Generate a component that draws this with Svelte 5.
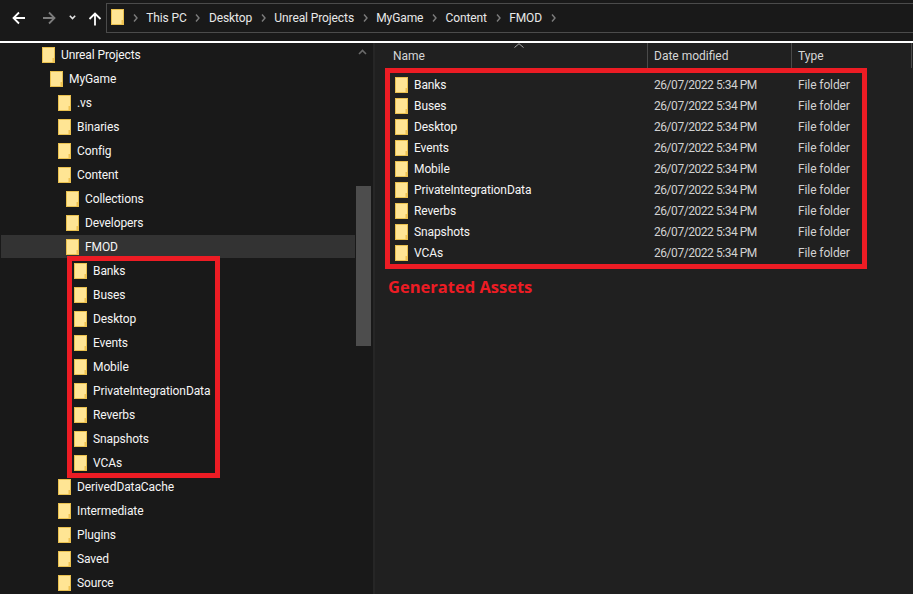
<script>
  const crumbs = ['This PC', 'Desktop', 'Unreal Projects', 'MyGame', 'Content', 'FMOD'];
  const generated = ['Banks', 'Buses', 'Desktop', 'Events', 'Mobile', 'PrivateIntegrationData', 'Reverbs', 'Snapshots', 'VCAs'];
  const before = [
    ['Unreal Projects', 0],
    ['MyGame', 1],
    ['.vs', 2],
    ['Binaries', 2],
    ['Config', 2],
    ['Content', 2],
    ['Collections', 3],
    ['Developers', 3]
  ];
  const after = ['DerivedDataCache', 'Intermediate', 'Plugins', 'Saved', 'Source'];
</script>

{#snippet folder()}
  <svg class="folder" width="13" height="16" viewBox="0 0 13 16">
    <rect x="0.5" y="0.5" width="12" height="15" fill="#ffe594" stroke="#eac14f" />
    <path d="M10.5 15.5 V11 H12.5 V15.5 Z" fill="#efc253" />
  </svg>
{/snippet}

{#snippet chevron()}
  <svg class="sep" width="5" height="8" viewBox="0 0 5 8"><path d="M1 0.5 L4 4 L1 7.5" fill="none" stroke="#7c7c7c" stroke-width="1.4" /></svg>
{/snippet}

<div class="window">
  <header class="toolbar">
    <div class="nav">
      <svg class="back" width="14" height="14" viewBox="0 0 14 14"><path d="M13 7 H2 M7 1.5 L1.5 7 L7 12.5" fill="none" stroke="#fff" stroke-width="1.8" /></svg>
      <svg class="forward" width="14" height="14" viewBox="0 0 14 14"><path d="M1 7 H12 M7 1.5 L12.5 7 L7 12.5" fill="none" stroke="#7d7d7d" stroke-width="1.8" /></svg>
      <svg class="recent" width="7" height="5" viewBox="0 0 7 5"><path d="M0.8 0.8 L3.5 3.6 L6.2 0.8" fill="none" stroke="#e6e6e6" stroke-width="1.5" /></svg>
      <svg class="up" width="14" height="14" viewBox="0 0 14 14"><path d="M7 13.5 V2 M1.5 7 L7 1.5 L12.5 7" fill="none" stroke="#fff" stroke-width="1.8" /></svg>
    </div>
    <div class="address">
      {@render folder()}
      {#each crumbs as crumb}
        {@render chevron()}
        <span class="crumb">{crumb}</span>
      {/each}
      {@render chevron()}
    </div>
  </header>

  <main class="panes">
    <aside class="tree">
      <div class="tree-rows">
        {#each before as [name, depth]}
          <div class="row" style="padding-left: {42 + depth * 8}px">{@render folder()}<span>{name}</span></div>
        {/each}
        <div class="row selected" style="padding-left: 65px">{@render folder()}<span>FMOD</span></div>
        <div class="tree-group">
          {#each generated as name}
            <div class="row" style="padding-left: 74px">{@render folder()}<span>{name}</span></div>
          {/each}
        </div>
        {#each after as name}
          <div class="row" style="padding-left: 58px">{@render folder()}<span>{name}</span></div>
        {/each}
      </div>
      <div class="scrollbar">
        <svg class="scroll-up" width="9" height="6" viewBox="0 0 9 6"><path d="M1 5 L4.5 1.5 L8 5" fill="none" stroke="#6a6a6a" stroke-width="1.6" /></svg>
        <div class="thumb"></div>
      </div>
    </aside>

    <section class="list">
      <svg class="sort" width="10" height="5" viewBox="0 0 10 5"><path d="M0.5 4.5 L5 0.7 L9.5 4.5" fill="none" stroke="#a8a8a8" /></svg>
      <div class="head">
        <span class="col name">Name</span>
        <span class="col date">Date modified</span>
        <span class="col type">Type</span>
      </div>
      <div class="list-group">
        {#each generated as name}
          <div class="item">
            <span class="item-name">{@render folder()}<span>{name}</span></span>
            <span class="item-date">26/07/2022 5:34 PM</span>
            <span class="item-type">File folder</span>
          </div>
        {/each}
      </div>
      <div class="caption">Generated Assets</div>
    </section>
  </main>
</div>

<style>
  :global(body) {
    margin: 0;
    background: #191919;
  }

  .window {
    width: 913px;
    height: 594px;
    overflow: hidden;
    display: flex;
    flex-direction: column;
    background: #191919;
    color: #fff;
    font-family: Roboto, "Noto Sans", sans-serif;
    font-size: 12px;
    letter-spacing: -0.1px;
  }

  .folder {
    flex: none;
    display: block;
  }

  .toolbar {
    flex: none;
    display: flex;
    align-items: flex-start;
    box-sizing: border-box;
    padding-top: 3px;
    border-bottom: 2px solid #fff;
    height: 43px;
  }

  .nav {
    width: 106px;
    flex: none;
    height: 30px;
    display: flex;
    align-items: center;
    padding-left: 12px;
    box-sizing: border-box;
  }

  .forward {
    margin-left: 16px;
  }

  .recent {
    margin-left: 13px;
    margin-top: -2px;
  }

  .up {
    margin-left: 12px;
    margin-top: 2px;
  }

  .address {
    flex: none;
    width: 860px;
    height: 30px;
    box-sizing: border-box;
    border: 1px solid #4b4b4b;
    display: flex;
    align-items: center;
    padding-left: 4px;
    color: #e8e8e8;
  }

  .address .folder {
    margin-top: -2px;
  }

  .sep {
    margin: 0 8.6px;
    flex: none;
  }

  .panes {
    flex: 1;
    display: flex;
    min-height: 0;
  }

  .tree {
    width: 375px;
    flex: none;
    box-sizing: border-box;
    display: flex;
    border-right: 2px solid #262626;
    overflow: hidden;
  }

  .tree-rows {
    width: 355px;
    flex: none;
  }

  .row {
    height: 24px;
    display: flex;
    align-items: center;
    gap: 6px;
    box-sizing: border-box;
    color: #f5f5f5;
    white-space: nowrap;
  }

  .selected {
    background: #333;
    margin-left: 1px;
    height: 23px;
    margin-bottom: 1px;
  }

  .tree-group {
    position: relative;
  }

  .tree-group::after,
  .list-group::after {
    content: "";
    position: absolute;
    border: 5px solid #ed1c24;
    pointer-events: none;
  }

  .tree-group::after {
    left: 67px;
    width: 143px;
    top: -3px;
    height: 212px;
  }

  .scrollbar {
    width: 16px;
    flex: none;
    position: relative;
  }

  .scroll-up {
    position: absolute;
    left: 3px;
    top: 6px;
  }

  .thumb {
    position: absolute;
    left: 1px;
    top: 143px;
    width: 15px;
    height: 160px;
    background: #4d4d4d;
  }

  .list {
    flex: 1;
    position: relative;
    background: #202020;
    min-width: 0;
  }

  .sort {
    position: absolute;
    left: 139px;
    top: 0;
  }

  .head {
    height: 25px;
    display: flex;
    color: #d6d6d6;
    margin-left: 12px;
    letter-spacing: 0;
  }

  .col {
    display: flex;
    align-items: center;
    box-sizing: border-box;
    border-right: 1px solid #4a4a4a;
    padding-left: 6px;
  }

  .col.name {
    width: 261px;
  }

  .col.date {
    width: 144px;
  }

  .col.type {
    width: 120px;
  }

  .list-group {
    position: relative;
    padding-top: 6px;
  }

  .list-group::after {
    left: 10px;
    top: 0;
    width: 472px;
    height: 191px;
  }

  .item {
    height: 21px;
    display: flex;
    align-items: center;
  }

  .item-name {
    width: 279px;
    padding-left: 20px;
    box-sizing: border-box;
    display: flex;
    align-items: center;
    gap: 6px;
    color: #f5f5f5;
  }

  .item-date {
    width: 144px;
    color: #d2d2d2;
    letter-spacing: -0.45px;
  }

  .item-type {
    color: #d2d2d2;
  }

  .caption {
    margin: 12px 0 0 13px;
    color: #ed1c24;
    font-family: "Open Sans", sans-serif;
    font-size: 16.5px;
    font-weight: 700;
    letter-spacing: 0;
  }
</style>
